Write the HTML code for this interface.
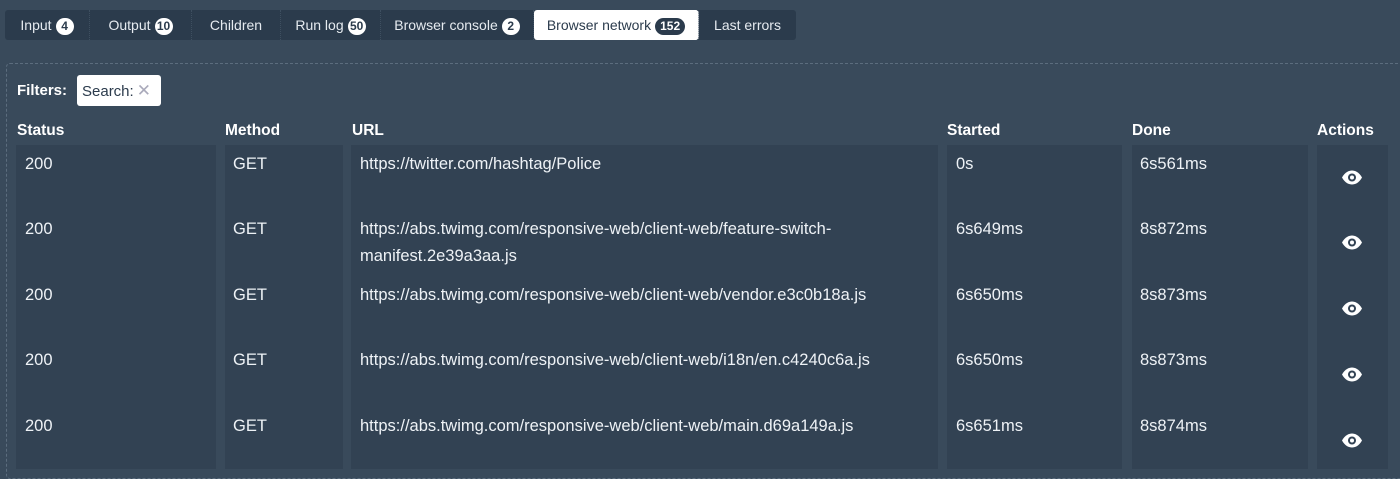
<!DOCTYPE html>
<html><head><style>
body{margin:0;width:1400px;height:475px;background:#394a5b;font-family:"Liberation Sans",sans-serif;color:#fff;overflow:hidden;position:relative}
.tabs{position:absolute;left:5px;top:10px;height:30px;width:791px;background:#2b3b4c;border-radius:3px;display:flex}
.tab{height:30px;line-height:30px;font-size:14px;color:#e6ebf0;border-right:1px dotted #3e4f60;box-sizing:border-box;white-space:nowrap;text-align:center;flex:none}
.tab.act{background:#fff;color:#2b3b4c;border-radius:3px}
.b{display:inline-block;background:#fff;color:#2b3b4c;border-radius:9px;min-width:18px;height:17px;line-height:17px;font-size:12px;font-weight:bold;text-align:center;margin-left:4px;padding:0 1px;box-sizing:border-box}
.act .b{background:#2b3b4c;color:#fff;padding:0 5px}
.panel{position:absolute;left:6px;top:63px;right:-4px;bottom:-4px;border:1px dashed #5c6d7e;border-radius:4px}
.filt{position:absolute;left:17px;top:82px;font-weight:bold;font-size:15px}
.search{position:absolute;left:77px;top:75px;width:84px;height:31px;background:#fff;border-radius:3px;color:#2b3b4c;font-size:15px;line-height:31px;padding-left:5px;box-sizing:border-box}
.search span{color:#aab;font-size:17px;margin-left:3px}
.h{position:absolute;top:122px;font-weight:bold;font-size:15.5px}
.col{position:absolute;top:145px;height:324px;background:#324253}
.c{position:absolute;font-size:16.5px;color:#eef2f6}
svg{position:absolute}
</style></head><body>
<div class="tabs">
<div class="tab" style="width:85px">Input<span class="b">4</span></div>
<div class="tab" style="width:102px">Output<span class="b">10</span></div>
<div class="tab" style="width:89px">Children</div>
<div class="tab" style="width:100px">Run log<span class="b">50</span></div>
<div class="tab" style="width:153px">Browser console<span class="b">2</span></div>
<div class="tab act" style="width:165px">Browser network<span class="b">152</span></div>
<div class="tab" style="width:97px;border:none">Last errors</div>
</div>
<div class="panel"></div>
<div class="filt">Filters:</div>
<div class="search">Search:<span>✕</span></div>
<div class="h" style="left:17px">Status</div>
<div class="h" style="left:225px">Method</div>
<div class="h" style="left:352px">URL</div>
<div class="h" style="left:947px">Started</div>
<div class="h" style="left:1132px">Done</div>
<div class="h" style="left:1317px">Actions</div>
<div class="col" style="left:16px;width:200px"></div>
<div class="col" style="left:225px;width:118px"></div>
<div class="col" style="left:351px;width:587px"></div>
<div class="col" style="left:947px;width:175px"></div>
<div class="col" style="left:1132px;width:176px"></div>
<div class="col" style="left:1317px;width:71px"></div>

<div class="c" style="left:25px;top:155px">200</div><div class="c" style="left:233px;top:155px">GET</div><div class="c" style="left:360px;top:155px">https://twitter.com/hashtag/Police</div><div class="c" style="left:956px;top:155px">0s</div><div class="c" style="left:1140px;top:155px">6s561ms</div>
<div class="c" style="left:25px;top:220px">200</div><div class="c" style="left:233px;top:220px">GET</div><div class="c" style="left:360px;top:220px;line-height:27px;margin-top:-4px">https://abs.twimg.com/responsive-web/client-web/feature-switch-<br>manifest.2e39a3aa.js</div><div class="c" style="left:956px;top:220px">6s649ms</div><div class="c" style="left:1140px;top:220px">8s872ms</div>
<div class="c" style="left:25px;top:286px">200</div><div class="c" style="left:233px;top:286px">GET</div><div class="c" style="left:360px;top:286px">https://abs.twimg.com/responsive-web/client-web/vendor.e3c0b18a.js</div><div class="c" style="left:956px;top:286px">6s650ms</div><div class="c" style="left:1140px;top:286px">8s873ms</div>
<div class="c" style="left:25px;top:351px">200</div><div class="c" style="left:233px;top:351px">GET</div><div class="c" style="left:360px;top:351px">https://abs.twimg.com/responsive-web/client-web/i18n/en.c4240c6a.js</div><div class="c" style="left:956px;top:351px">6s650ms</div><div class="c" style="left:1140px;top:351px">8s873ms</div>
<div class="c" style="left:25px;top:417px">200</div><div class="c" style="left:233px;top:417px">GET</div><div class="c" style="left:360px;top:417px">https://abs.twimg.com/responsive-web/client-web/main.d69a149a.js</div><div class="c" style="left:956px;top:417px">6s651ms</div><div class="c" style="left:1140px;top:417px">8s874ms</div>

<svg style="left:1341px;top:170px" width="22" height="15" viewBox="0 0 22 15"><path d="M1 7.5C4 2 8 0.5 11 0.5S18 2 21 7.5C18 13 14 14.5 11 14.5S4 13 1 7.5Z" fill="#fff"/><circle cx="11" cy="7.5" r="4" fill="#324253"/><circle cx="11" cy="7.5" r="2" fill="#fff"/></svg>
<svg style="left:1341px;top:235px" width="22" height="15" viewBox="0 0 22 15"><path d="M1 7.5C4 2 8 0.5 11 0.5S18 2 21 7.5C18 13 14 14.5 11 14.5S4 13 1 7.5Z" fill="#fff"/><circle cx="11" cy="7.5" r="4" fill="#324253"/><circle cx="11" cy="7.5" r="2" fill="#fff"/></svg>
<svg style="left:1341px;top:301px" width="22" height="15" viewBox="0 0 22 15"><path d="M1 7.5C4 2 8 0.5 11 0.5S18 2 21 7.5C18 13 14 14.5 11 14.5S4 13 1 7.5Z" fill="#fff"/><circle cx="11" cy="7.5" r="4" fill="#324253"/><circle cx="11" cy="7.5" r="2" fill="#fff"/></svg>
<svg style="left:1341px;top:367px" width="22" height="15" viewBox="0 0 22 15"><path d="M1 7.5C4 2 8 0.5 11 0.5S18 2 21 7.5C18 13 14 14.5 11 14.5S4 13 1 7.5Z" fill="#fff"/><circle cx="11" cy="7.5" r="4" fill="#324253"/><circle cx="11" cy="7.5" r="2" fill="#fff"/></svg>
<svg style="left:1341px;top:433px" width="22" height="15" viewBox="0 0 22 15"><path d="M1 7.5C4 2 8 0.5 11 0.5S18 2 21 7.5C18 13 14 14.5 11 14.5S4 13 1 7.5Z" fill="#fff"/><circle cx="11" cy="7.5" r="4" fill="#324253"/><circle cx="11" cy="7.5" r="2" fill="#fff"/></svg>
</body></html>
